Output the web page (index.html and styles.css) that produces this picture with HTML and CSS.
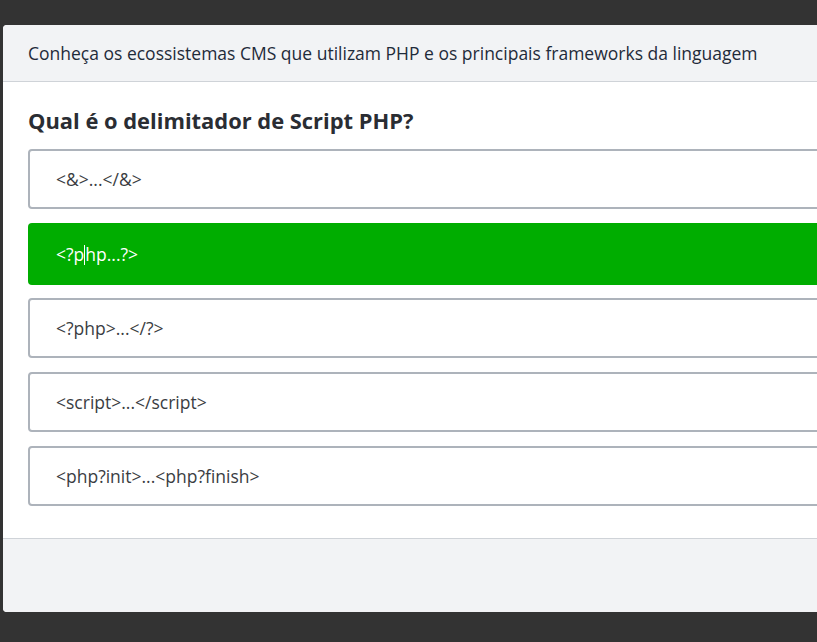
FILE: index.html
```html
<!DOCTYPE html>
<html lang="pt">
<head>
<meta charset="utf-8">
<title>Quiz PHP</title>
<link rel="stylesheet" href="styles.css">
</head>
<body>
<div class="modal">
  <div class="modal-header">Conheça os ecossistemas CMS que utilizam PHP e os principais frameworks da linguagem</div>
  <div class="modal-body">
    <h2 class="question">Qual é o delimitador de Script PHP?</h2>
    <div class="options">
      <div class="option">&lt;&amp;&gt;...&lt;/&amp;&gt;</div>
      <div class="option correct">&lt;?p<span class="caret"></span>hp...?&gt;</div>
      <div class="option">&lt;?php&gt;...&lt;/?&gt;</div>
      <div class="option">&lt;script&gt;...&lt;/script&gt;</div>
      <div class="option">&lt;php?init&gt;...&lt;php?finish&gt;</div>
    </div>
  </div>
  <div class="modal-footer"></div>
</div>
</body>
</html>
```
FILE: styles.css
```css
html, body {
  margin: 0;
  padding: 0;
  background: #333333;
  overflow: hidden;
  height: 642px;
}
body {
  font-family: "Open Sans", "Noto Sans", sans-serif;
  padding: 25px 0 0 3px;
  box-sizing: border-box;
}
.modal {
  width: 900px;
  background: #ffffff;
  border-radius: 4px;
  overflow: hidden;
}
.modal-header {
  background: #f2f3f5;
  border-bottom: 1px solid #cfd3d8;
  padding: 16px 25px;
  font-size: 17.5px;
  line-height: 24px;
  color: #1f2b3a;
}
.modal-body {
  padding: 24px 0 32px 25px;
}
.question {
  margin: 0 0 13px 0;
  font-size: 21.9px;
  line-height: 30px;
  font-weight: 700;
  color: #2a2d33;
}
.options {
  display: flex;
  flex-direction: column;
  gap: 14px;
}
.option {
  height: 56px;
  border: 2px solid #adb3bb;
  border-radius: 4px;
  padding: 0 26px;
  display: flex;
  align-items: center;
  font-size: 17.5px;
  color: #3a3d42;
}
.option.correct {
  height: 62px;
  border: none;
  background: #00ad00;
  color: #ffffff;
  padding: 0 28px;
  margin-bottom: -1px;
}
.caret {
  display: inline-block;
  width: 1px;
  height: 20px;
  background: #ffffff;
  margin-top: 2px;
}
.modal-footer {
  border-top: 1px solid #cfd3d8;
  background: #f2f3f5;
  height: 73px;
}
```
